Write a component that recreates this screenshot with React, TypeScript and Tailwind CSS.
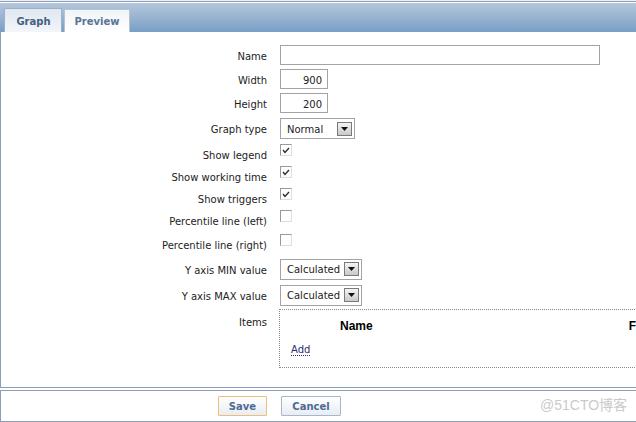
import React from "react";

const Label = ({ children, pt }: { children: React.ReactNode; pt?: string }) => (
  <div className={`w-[266px] shrink-0 text-right leading-[12px] text-[#1c1c1c] ${pt ?? ""}`}>{children}</div>
);

const Check = ({ checked }: { checked: boolean }) => (
  <div className="w-[12px] h-[12px] border border-t-[#9a9a9a] border-l-[#9a9a9a] border-r-[#dedede] border-b-[#dedede] bg-white flex items-center justify-center">
    {checked && (
      <svg width="8" height="7" viewBox="0 0 8 7">
        <path d="M1 3 L3 5.5 L7 1" fill="none" stroke="#2a2a2a" strokeWidth="1.3" />
      </svg>
    )}
  </div>
);

const Select = ({ value, w }: { value: string; w: string }) => (
  <div className={`${w} h-[21px] border border-[#a3a3a3] bg-white flex items-center justify-between pl-[6px] pr-[2px]`}>
    <span className="text-[#222] leading-[12px] mt-[2px]">{value}</span>
    <div className="w-[15px] h-[14px] border border-[#7a7a7a] bg-gradient-to-b from-[#f4f4f4] to-[#c9c9c9] flex items-center justify-center">
      <svg width="7" height="4" viewBox="0 0 7 4">
        <path d="M0 0 L7 0 L3.5 4 Z" fill="#111" />
      </svg>
    </div>
  </div>
);

export default function App() {
  return (
    <div className="relative w-[636px] h-[422px] overflow-hidden bg-white font-['DejaVu_Sans',sans-serif] text-[10px]">
      {/* header */}
      <div className="h-[1px] bg-[#eef1f5]" />
      <div className="h-[1px] bg-[#8d9db7]" />
      <div className="h-[1px] bg-white" />
      <div className="h-[29px] bg-gradient-to-b from-[#b4c7dc] via-[#98b3d0] to-[#789ec6] flex items-end pl-[4px] gap-[2px]">
        <div className="w-[58px] h-[24px] border border-b-0 border-[#9bafc7] bg-gradient-to-b from-[#dfe7f0] to-[#f3f6f9] flex items-center justify-center pl-[1px] pt-[2px] font-bold text-[#45607f]">
          Graph
        </div>
        <div className="w-[66px] h-[23px] border border-b-0 border-[#b5c4d5] bg-gradient-to-b from-[#f1f4f8] to-[#ffffff] flex items-center justify-center pt-[1px] font-bold text-[#5a7494]">
          Preview
        </div>
      </div>

      {/* form panel */}
      <div className="h-[356px] border-l border-b border-[#8d9db7] pt-[11px]">
        <div className="flex h-[24px] items-center">
          <Label pt="mt-[3px]">Name</Label>
          <div className="ml-[13px] w-[320px] h-[20px] border border-[#a3a3a3]" />
        </div>
        <div className="flex h-[24px] items-center">
          <Label pt="mt-[3px]">Width</Label>
          <div className="ml-[13px] w-[48px] h-[20px] border border-[#a3a3a3] flex items-center justify-end pr-[5px] pt-[2px] text-[#222]">900</div>
        </div>
        <div className="flex h-[24px] items-center">
          <Label pt="mt-[3px]">Height</Label>
          <div className="ml-[13px] w-[48px] h-[20px] border border-[#a3a3a3] flex items-center justify-end pr-[5px] pt-[2px] text-[#222]">200</div>
        </div>
        <div className="flex h-[27px] items-center">
          <Label pt="mt-[3px]">Graph type</Label>
          <div className="ml-[13px]">
            <Select value="Normal" w="w-[75px]" />
          </div>
        </div>
        {[
          ["Show legend", true],
          ["Show working time", true],
          ["Show triggers", true],
          ["Percentile line (left)", false],
        ].map(([l, c]) => (
          <div key={l as string} className="flex h-[22px] items-start">
            <Label pt="pt-[8px]">{l as string}</Label>
            <div className="ml-[13px] mt-[2px]">
              <Check checked={c as boolean} />
            </div>
          </div>
        ))}
        <div className="flex h-[26px] items-start">
          <Label pt="pt-[10px]">Percentile line (right)</Label>
          <div className="ml-[13px] mt-[4px]">
            <Check checked={false} />
          </div>
        </div>
        <div className="flex h-[26px] items-center">
          <Label pt="mt-[3px]">Y axis MIN value</Label>
          <div className="ml-[13px]">
            <Select value="Calculated" w="w-[82px]" />
          </div>
        </div>
        <div className="flex h-[26px] items-center">
          <Label pt="mt-[3px]">Y axis MAX value</Label>
          <div className="ml-[13px]">
            <Select value="Calculated" w="w-[82px]" />
          </div>
        </div>
        <div className="flex items-start mt-[1px]">
          <Label pt="pt-[8px]">Items</Label>
          <div className="ml-[12px] w-[420px] h-[59px] border border-dotted border-[#8a8a8a] shrink-0">
            <div className="flex pt-[9px] font-['Liberation_Sans',sans-serif] font-bold text-[12px] leading-[14px] text-black">
              <span className="ml-[60px]">Name</span>
              <span className="ml-[256px]">F</span>
            </div>
            <div className="pl-[11px] pt-[9px]">
              <span className="leading-[12px] text-[#2e2c70] border-b border-dotted border-[#2e2c70]">Add</span>
            </div>
          </div>
        </div>
      </div>

      {/* footer */}
      <div className="mt-[2px] h-[32px] border-l border-t border-b border-[#8d9db7] flex items-start pt-[5px] pl-[217px] gap-[14px]">
        <div className="w-[49px] h-[20px] border border-[#f0bd78] rounded-[1px] bg-gradient-to-b from-[#ffffff] to-[#e7edf4] flex items-center justify-center pt-[1px] font-bold text-[#4f6a8f]">
          Save
        </div>
        <div className="w-[60px] h-[20px] border border-[#a9b6c9] rounded-[1px] bg-gradient-to-b from-[#ffffff] to-[#e7edf4] flex items-center justify-center pt-[1px] font-bold text-[#4f6a8f]">
          Cancel
        </div>
      </div>

      <div className="absolute left-[540px] top-[396px] text-[14px] leading-[18px] text-[#cacaca] font-['Liberation_Sans','Noto_Sans_CJK_SC',sans-serif]">
        @51CTO博客
      </div>
    </div>
  );
}
